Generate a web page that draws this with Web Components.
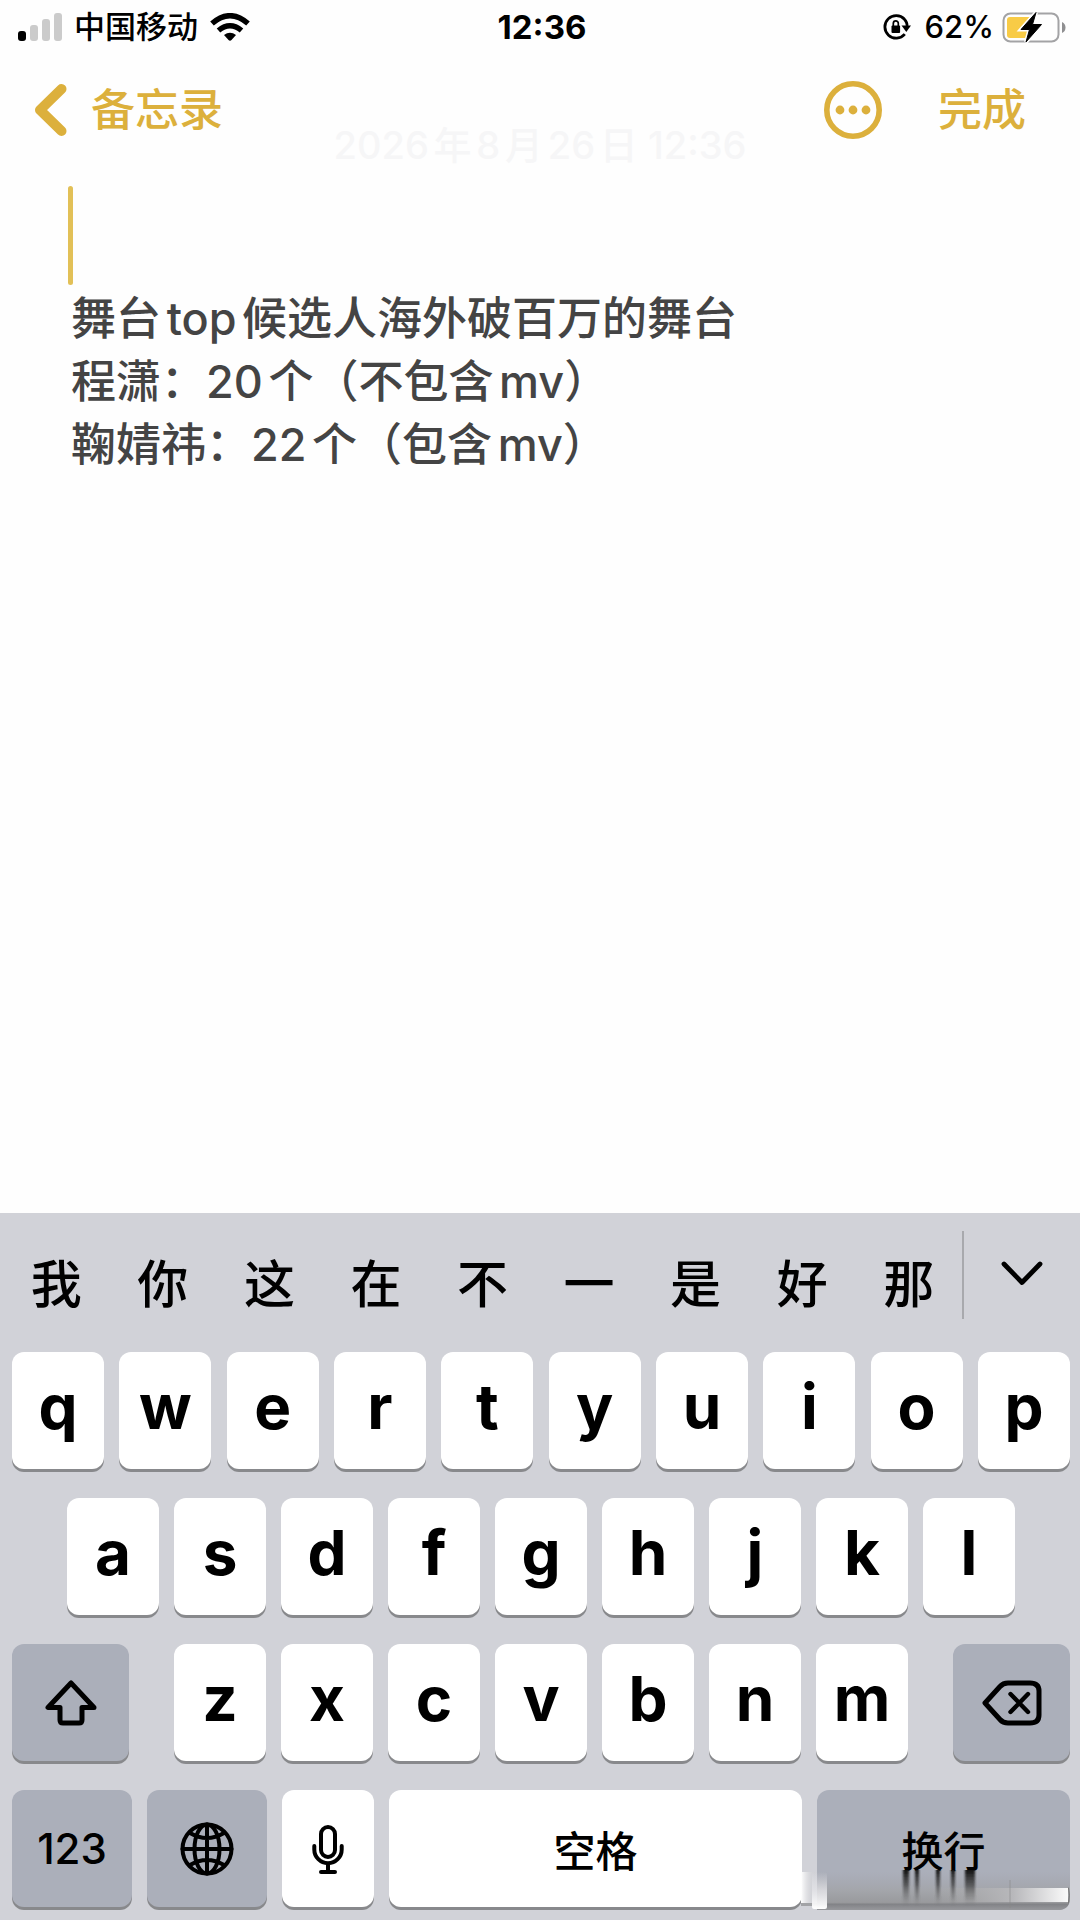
<!DOCTYPE html>
<html lang="zh-CN">
<head>
<meta charset="utf-8">
<meta name="viewport" content="width=device-width, initial-scale=1">
<title>备忘录</title>
<style>
    body {
        margin: 0;
        background: #fefefe;
        font-family: Inter, "Noto Sans CJK SC", sans-serif;
    }
</style>
</head>
<body>
<notes-app></notes-app>

<script>
'use strict';

class StatusBar extends HTMLElement {
    constructor() {
        super();

        this.attachShadow({mode: 'open'}).innerHTML = `
            <style>
            :host {
                display: grid;
                grid-template-columns: 1fr auto 1fr;
                align-items: center;
                height: 54px;
                padding: 0 14px 0 18px;
                color: #000;
                font-size: 31px;
                font-weight: 500;
                line-height: 38px;
            }
            svg {
                display: block;
            }
            .left, .right {
                display: flex;
                align-items: center;
            }
            .left {
                gap: 12px;
            }
            .right {
                justify-content: flex-end;
                gap: 8px;
            }
            .lock {
                margin-right: 6px;
            }
            time {
                font-size: 33px;
                font-weight: 700;
            }
            </style>
            <div class="left">
                <svg width="44" height="28" viewBox="0 0 44 28">
                    <rect x="0" y="18" width="8" height="10" rx="3"/>
                    <g fill="#cbcbcb">
                        <rect x="12" y="12" width="8" height="16" rx="3"/>
                        <rect x="24" y="6" width="8" height="22" rx="3"/>
                        <rect x="36" y="0" width="8" height="28" rx="3"/>
                    </g>
                </svg>
                <span>中国移动</span>
                <svg width="40" height="28" viewBox="0 0 40 28">
                    <g fill="none" stroke="#000" stroke-width="5.500">
                        <path d="M2 10.500Q20 -5 38 10.500"/>
                        <path d="M8.500 17.500Q20 8 31.500 17.500"/>
                    </g>
                    <path d="M14 22q6-4.500 12 0l-4.500 5q-1.500 1.500-3 0z"/>
                </svg>
            </div>
            <time>12:36</time>
            <div class="right">
                <svg class="lock" width="28" height="28" viewBox="0 0 28 28">
                    <path d="M21.500 6.200A11.300 11.300 0 1 0 21.800 21.200M20.500 5.300Q24.500 9.500 24 13" fill="none" stroke="#000" stroke-width="2.800"/>
                    <path d="M18.500 12.500H28L23.300 19z"/>
                    <rect x="8.500" y="12.500" width="8.600" height="7.500" rx="1"/>
                    <path d="M10.300 13v-2.600a2.500 2.500 0 0 1 5 0V13" fill="none" stroke="#000" stroke-width="1.700"/>
                </svg>
                <span>62%</span>
                <svg width="64" height="32" viewBox="0 0 64 32">
                    <rect x="1.500" y="2.500" width="55" height="28" rx="7" fill="none" stroke="#a3a3a5" stroke-width="2"/>
                    <path d="M8 6h22v21H8q-3 0-3-3V9q0-3 3-3z" fill="#f8cb46"/>
                    <path d="M60 11q3.500 1.500 3.500 5.500T60 22z" fill="#8f8f91"/>
                    <path d="M34 1.500L19 18.500h8.500L24 31l15.500-17.500h-9z" stroke="#fefefe" stroke-width="4" fill="#fefefe"/>
                    <path d="M34 1.500L19 18.500h8.500L24 31l15.500-17.500h-9z" stroke="#000" stroke-linejoin="round"/>
                </svg>
            </div>
        `;
    }
}

class NavBar extends HTMLElement {
    constructor() {
        super();

        this.attachShadow({mode: 'open'}).innerHTML = `
            <style>
            :host {
                display: flex;
                align-items: center;
                height: 86px;
                padding: 0 54px 0 34px;
                color: #dcb03c;
            }
            a, button {
                display: flex;
                align-items: center;
                margin: 0;
                border: 0;
                padding: 0;
                background: none;
                color: inherit;
                font: inherit;
                font-size: 44px;
                font-weight: 500;
                line-height: 56px;
                text-decoration: none;
                cursor: pointer;
            }
            a {
                gap: 24px;
                margin-right: auto;
            }
            .more {
                margin-right: 56px;
            }
            </style>
            <a href="#notes">
                <svg width="33" height="52" viewBox="0 0 33 52" aria-hidden="true">
                    <path d="M27.500 5L6 26L27.500 47" fill="none" stroke="currentColor" stroke-width="10" stroke-linecap="round" stroke-linejoin="round"/>
                </svg>
                <span>备忘录</span>
            </a>
            <button class="more" aria-label="更多">
                <svg width="58" height="58" viewBox="0 0 58 58">
                    <circle cx="29" cy="29" r="26.200" fill="none" stroke="currentColor" stroke-width="5.600"/>
                    <g fill="currentColor">
                        <circle cx="16" cy="29" r="4.400"/>
                        <circle cx="29" cy="29" r="4.400"/>
                        <circle cx="42" cy="29" r="4.400"/>
                    </g>
                </svg>
            </button>
            <button>完成</button>
        `;
    }
}

class NoteEditor extends HTMLElement {
    constructor() {
        super();

        this.attachShadow({mode: 'open'}).innerHTML = `
            <style>
            :host {
                display: flex;
                flex-direction: column;
                flex: 1;
                position: relative;
                margin-top: -28px;
            }
            time {
                color: #f6f6f7;
                font-size: 38px;
                font-weight: 500;
                line-height: 40px;
                text-align: center;
                text-autospace: normal;
                pointer-events: none;
            }
            textarea {
                flex: 1;
                box-sizing: border-box;
                width: 100%;
                margin: 0;
                border: 0;
                outline: 0;
                padding: 122px 71px 0;
                background: none;
                color: #444;
                caret-color: #e2c057;
                font: 500 45px/63px Inter, "Noto Sans CJK SC", sans-serif;
                text-autospace: normal;
                resize: none;
            }
            .caret {
                position: absolute;
                top: 61px;
                left: 68px;
                width: 5px;
                height: 99px;
                border-radius: 3px;
                background: #e2c057;
            }
            </style>
            <time>2026年8月26日 12:36</time>
            <textarea aria-label="备忘录" spellcheck="false"></textarea>
            <span class="caret"></span>
        `;
        this.shadowRoot.querySelector('textarea').value = this.textContent.trim();
    }
}

class CandidateBar extends HTMLElement {
    constructor() {
        super();

        const words = this.getAttribute('words').split(' ');

        this.attachShadow({mode: 'open'}).innerHTML = `
            <style>
            :host {
                display: flex;
                height: 139px;
            }
            .words {
                display: grid;
                grid-template-columns: repeat(9, 1fr);
                flex: 1;
                padding-left: 3px;
            }
            button {
                margin: 0;
                border: 0;
                padding: 0 0 4px;
                background: none;
                color: #000;
                font: inherit;
                font-size: 51px;
                font-weight: 500;
                cursor: pointer;
            }
            .fold {
                width: 116px;
                padding-bottom: 28px;
            }
            .rule {
                width: 2px;
                height: 88px;
                margin-top: 18px;
                background: #a8a9ad;
            }
            </style>
            <div class="words">${words.map(word => `<button>${word}</button>`).join('')}</div>
            <span class="rule"></span>
            <button class="fold" aria-label="收起">
                <svg width="42" height="26" viewBox="0 0 42 26">
                    <path d="M3 3L21 21.500L39 3" fill="none" stroke="#000" stroke-width="4.800" stroke-linecap="round" stroke-linejoin="round"/>
                </svg>
            </button>
        `;
    }
}

class KeyCap extends HTMLElement {
    constructor() {
        super();

        this.attachShadow({mode: 'open'}).innerHTML = `
            <style>
            :host {
                display: block;
                position: relative;
                height: 117px;
            }
            button {
                display: flex;
                align-items: center;
                justify-content: center;
                box-sizing: border-box;
                width: 100%;
                height: 100%;
                margin: 0;
                border: 0;
                border-radius: 12px;
                padding: 0 0 8px;
                background: #fff;
                box-shadow: 0 3px 0 #88898c;
                color: #000;
                font: inherit;
                font-size: 62px;
                font-weight: 700;
                cursor: pointer;
            }
            :host([kind]) button {
                padding: 0;
                font-size: 42px;
                font-weight: 500;
            }
            :host([kind=dark]) button {
                background: #abafba;
            }
            </style>
            <button aria-label="${this.getAttribute('label') || this.textContent.trim()}"><slot></slot></button>
            <slot name="over"></slot>
        `;
    }
}

class KeyBoard extends HTMLElement {
    constructor() {
        super();

        const caps = letters => [...letters].map(letter => `<key-cap class="unit">${letter}</key-cap>`).join('');

        this.attachShadow({mode: 'open'}).innerHTML = `
            <style>
            :host {
                display: block;
                padding-bottom: 13px;
                background: #d1d2d8;
            }
            .rows {
                display: grid;
                gap: 29px;
                padding: 0 10px 0 12px;
            }
            .row {
                --unit: calc((100vw - 160px) / 10);
                display: flex;
                justify-content: center;
                gap: 15px;
            }
            .row:first-child {
                justify-content: space-between;
            }
            .unit {
                width: var(--unit);
            }
            .side {
                width: 117px;
            }
            .side:first-child {
                margin-right: auto;
            }
            .side:last-child {
                margin-left: auto;
            }
            .mode {
                width: 120px;
            }
            .space {
                flex: 1;
            }
            .return {
                width: 253px;
            }
            svg {
                display: block;
                fill: none;
                stroke: #000;
                stroke-linecap: round;
                stroke-linejoin: round;
            }
            .smear {
                position: absolute;
                right: 0;
                bottom: -3px;
                stroke: none;
                pointer-events: none;
            }
            </style>
            <candidate-bar words="我 你 这 在 不 一 是 好 那"></candidate-bar>
            <div class="rows">
                <div class="row">${caps('qwertyuiop')}</div>
                <div class="row">${caps('asdfghjkl')}</div>
                <div class="row">
                    <key-cap class="side" kind="dark" label="上档">
                        <svg width="52" height="46" viewBox="0 0 52 46" stroke-width="5">
                            <path d="M26 3L3 27.500H15V40q0 3 3 3H34q3 0 3-3V27.500H49z"/>
                        </svg>
                    </key-cap>
                    ${caps('zxcvbnm')}
                    <key-cap class="side" kind="dark" label="删除">
                        <svg width="60" height="46" viewBox="0 0 60 46" stroke-width="5">
                            <path d="M3 23L18 6.500Q21 3 26 3H48Q57 3 57 11V35Q57 43 48 43H26Q21 43 18 39.500z"/>
                            <path d="M28.500 14L46 32M46 14L28.500 32" stroke-width="4.400"/>
                        </svg>
                    </key-cap>
                </div>
                <div class="row">
                    <key-cap class="mode" kind="dark">123</key-cap>
                    <key-cap class="mode" kind="dark" label="切换键盘">
                        <svg width="54" height="54" viewBox="0 0 54 54" stroke-width="4">
                            <circle cx="27" cy="27" r="24.500" stroke-width="4"/>
                            <ellipse cx="27" cy="27" rx="12.500" ry="24.500"/>
                            <path d="M27 2.500V51.500M2.500 27H51.500M10 11Q27 21 44 11M10 43Q27 33 44 43"/>
                        </svg>
                    </key-cap>
                    <key-cap class="unit" kind="light" label="听写">
                        <svg width="32" height="50" viewBox="0 0 32 50" stroke-width="4">
                            <rect x="9" y="3" width="14" height="30" rx="7"/>
                            <path d="M2.300 22v3.500a13.700 13.700 0 0 0 27.400 0V22M16 40v8M9 48H23"/>
                        </svg>
                    </key-cap>
                    <key-cap class="space" kind="light">空格</key-cap>
                    <key-cap class="return" kind="dark">
                        换行
                        <svg slot="over" class="smear" width="269" height="40" viewBox="0 0 269 40" aria-hidden="true">
                            <defs>
                                <linearGradient id="fade" x2="0" y2="1">
                                    <stop offset="0" stop-color="#111"/>
                                    <stop offset=".4" stop-color="#333" stop-opacity=".7"/>
                                    <stop offset="1" stop-color="#666" stop-opacity="0"/>
                                </linearGradient>
                                <linearGradient id="pale" x2="0" y2="1">
                                    <stop offset="0" stop-color="#e8e8ec" stop-opacity="0"/>
                                    <stop offset=".5" stop-color="#e4e4e8" stop-opacity=".8"/>
                                    <stop offset="1" stop-color="#fff"/>
                                </linearGradient>
                                <linearGradient id="edge">
                                    <stop offset="0" stop-color="#fff"/>
                                    <stop offset="1" stop-color="#c4c4c8" stop-opacity="0"/>
                                </linearGradient>
                                <linearGradient id="base" x2="0" y2="1">
                                    <stop offset="0" stop-color="#a4a6ae" stop-opacity="0"/>
                                    <stop offset=".5" stop-color="#a3a5aa"/>
                                    <stop offset=".8" stop-color="#999a9d"/>
                                    <stop offset=".85" stop-color="#828387"/>
                                    <stop offset="1" stop-color="#97989c"/>
                                </linearGradient>
                                <linearGradient id="shine">
                                    <stop offset="0" stop-color="#aaa" stop-opacity="0"/>
                                    <stop offset=".6" stop-color="#b8b8bb"/>
                                    <stop offset="1" stop-color="#fafafa"/>
                                </linearGradient>
                                <filter id="soft" x="-10%" width="120%">
                                    <feGaussianBlur stdDeviation="1.200 0"/>
                                </filter>
                            </defs>
                            <path d="M16 2H269V28q0 12-12 12H16z" fill="url(#base)"/>
                            <rect x="0" y="2" width="16" height="31" fill="url(#edge)"/>
                            <rect x="0" y="33" width="16" height="3" fill="#a2a3a6"/>
                            <rect x="130" y="18" width="137" height="14" fill="url(#shine)"/>
                            <path d="M267.500 18q2 7 0 15" stroke="#777" fill="none"/>
                            <rect x="11" y="2" width="15" height="37" rx="2" fill="url(#pale)"/>
                            <g fill="url(#fade)" filter="url(#soft)">
                                <rect x="102" y="0" width="6" height="36"/>
                                <rect x="114" y="0" width="4" height="36"/>
                                <rect x="135" y="0" width="4" height="36"/>
                                <rect x="150" y="0" width="4" height="36"/>
                                <rect x="164" y="0" width="10" height="36"/>
                            </g>
                            <rect x="208" y="10" width="2" height="28" fill="#888" opacity=".3"/>
                        </svg>
                    </key-cap>
                </div>
            </div>
        `;
    }
}

class NotesApp extends HTMLElement {
    constructor() {
        super();

        this.attachShadow({mode: 'open'}).innerHTML = `
            <style>
            :host {
                display: flex;
                flex-direction: column;
                min-height: 100vh;
            }
            nav-bar {
                margin-top: 13px;
            }
            </style>
            <status-bar></status-bar>
            <nav-bar></nav-bar>
            <note-editor>
舞台top候选人海外破百万的舞台
程潇：20个（不包含mv）
鞠婧祎：22个（包含mv）
            </note-editor>
            <key-board></key-board>
        `;
    }
}

customElements.define('status-bar', StatusBar);
customElements.define('nav-bar', NavBar);
customElements.define('note-editor', NoteEditor);
customElements.define('candidate-bar', CandidateBar);
customElements.define('key-cap', KeyCap);
customElements.define('key-board', KeyBoard);
customElements.define('notes-app', NotesApp);
</script>
</body>
</html>
